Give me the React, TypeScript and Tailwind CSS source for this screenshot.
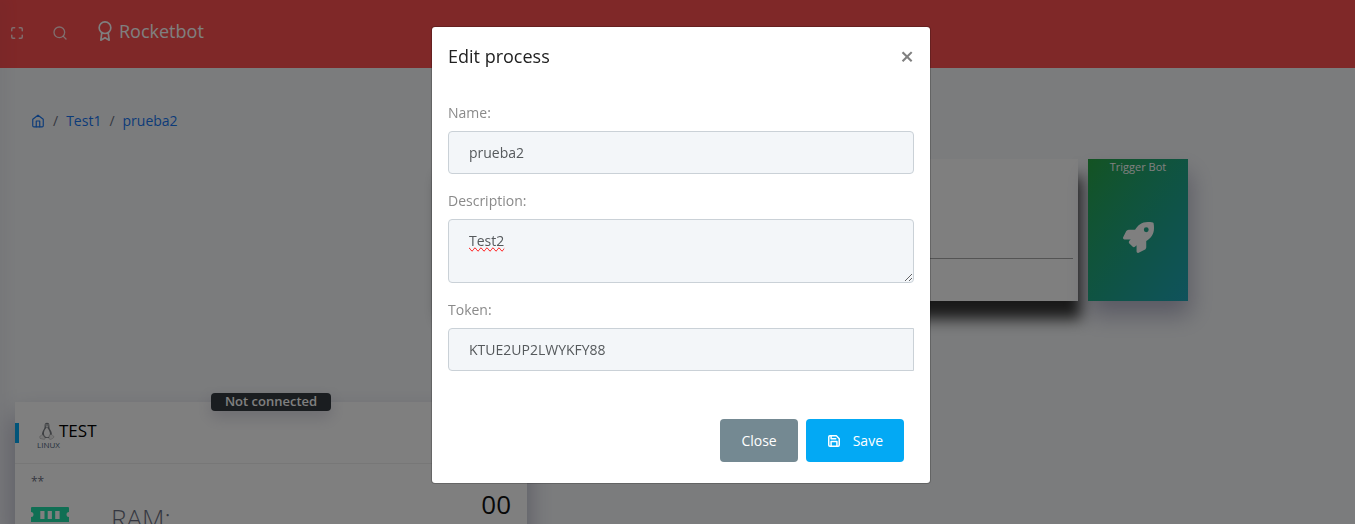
import { useState } from "react";
import { FiAward, FiHome, FiMaximize, FiSave, FiSearch } from "react-icons/fi";
import { FaRocket } from "react-icons/fa";

function Tux() {
  return (
    <svg viewBox="0 0 16 18" className="h-[18px] w-4" aria-hidden="true">
      <path
        d="M8 .8C6 .8 5.500 2.300 5.600 4c.1 2-.5 2.800-1.400 4.200C3.300 9.800 2.800 11.400 3 13l2.600 3h4.800l2.500-3.200c.1-1.700-.5-3.300-1.400-4.700C10.500 6.600 10.400 5.700 10.400 4 10.400 2 9.900.8 8 .8Z"
        fill="#7d8187"
      />
      <path d="M7.900 5.300c-.6.900-2.300 2.400-2.800 4.700-.4 2 .1 4.900 3 5.300 2.900-.4 3.200-3.100 2.600-5.100C10.200 8.200 8.700 6.400 7.900 5.300Z" fill="#fff" />
      <path d="m6.500 4.300 1.500-.8 1.600.8-1.500 1.400Z" fill="#e2e2e2" />
      <circle cx="7.100" cy="2.900" r=".7" fill="#fff" />
      <circle cx="9" cy="2.900" r=".7" fill="#fff" />
      <path
        d="m3.300 12.400 2.900 3.600c.1 1.200-1 1.500-2.100 1.200L1 16.400c-.6-.3.1-1.200-.2-2.100.6-.6 1.500-.3 2.500-1.900Zm9.400 0c.5 1.200 1.400 1.200 2.400 2.300-.5 1.300-2.100 2.400-3.600 2.700-1.100.2-1.700-.7-1.500-1.800l.4-2.700Z"
        fill="#ededed"
        stroke="#a3a3a3"
        strokeWidth=".5"
      />
    </svg>
  );
}

function RamIcon() {
  return (
    <svg viewBox="0 0 38 30" className="h-[30px] w-[38px]" aria-hidden="true">
      <path
        fillRule="evenodd"
        fill="#20dfa8"
        d="M1 0h36a1 1 0 0 1 1 1v4a2.500 2.500 0 0 0 0 5v5H0v-5a2.500 2.500 0 0 0 0-5V1a1 1 0 0 1 1-1Zm8.300 4v8h4.200V4Zm7.400 0v8h4.200V4Zm7.500 0v8h4.400V4Z"
      />
      <path fill="#20dfa8" d="M2 17h34v4H2z" />
    </svg>
  );
}

function TopBar() {
  return (
    <header className="flex h-[68px] items-center bg-[#ff5050] pb-[2px] text-[#ffffffcc]">
      <button type="button" aria-label="Full screen" className="ml-[10px]">
        <FiMaximize className="size-[14px]" strokeWidth={2.5} />
      </button>
      <button type="button" aria-label="Search" className="ml-7">
        <FiSearch className="size-4" />
      </button>
      <a href="#" className="ml-[27px] flex items-center gap-1 pb-1 text-lg text-white">
        <FiAward className="size-5" />
        Rocketbot
      </a>
    </header>
  );
}

function ServerCard() {
  return (
    <section className="relative w-[512px] bg-white shadow-[0_14px_24px_rgba(62,57,107,0.4)]">
      <span className="absolute -top-[9px] left-[196px] flex h-[18px] w-[120px] items-center justify-center rounded bg-[#343a40] text-[13px] font-semibold text-white shadow-[0_6px_16px_rgba(62,57,107,0.2)]">
        Not connected
      </span>
      <div className="flex h-[62px] items-center border-b border-[#efefef]">
        <span className="h-5 w-1 bg-[#03a9f4]" />
        <div className="ml-[18px] pt-1">
          <h2 className="flex items-center gap-1 pl-[2px] text-[17px] leading-5 text-black">
            <Tux />
            TEST
          </h2>
          <p className="text-[8px] leading-2 text-[#4b5f7a]">LINUX</p>
        </div>
      </div>
      <div className="px-4 pt-2">
        <p className="text-xs leading-5 text-[#6b6f82]">**</p>
        <div className="flex items-start">
          <div className="pt-[15px]">
            <RamIcon />
          </div>
          <span className="ml-[42px] pt-3 text-[26px] leading-7 font-light text-[#6b6f82]">RAM:</span>
          <span className="ml-auto text-[26px] leading-6 text-[#111]">00</span>
        </div>
      </div>
    </section>
  );
}

function EditDialog({ onClose }: { onClose: () => void }) {
  const field =
    "block w-full border border-[#cad1d7] bg-[#f3f6f9] px-5 py-[10px] text-sm leading-[21px] text-[#55595c] outline-none";
  return (
    <div className="fixed inset-0 flex items-start justify-center bg-black/50 pt-[26px] pl-[7px]">
      <form
        role="dialog"
        aria-modal="true"
        aria-labelledby="dialog-title"
        className="w-[500px] rounded border border-black/20 bg-white bg-clip-padding"
        onSubmit={(event) => event.preventDefault()}
      >
        <div className="flex items-center justify-between px-4 pt-[15px]">
          <h1 id="dialog-title" className="text-lg leading-7 text-[#212121]">
            Edit process
          </h1>
          <button
            type="button"
            aria-label="Close dialog"
            onClick={onClose}
            className="text-2xl leading-7 font-semibold text-[#808080]"
          >
            ×
          </button>
        </div>
        <div className="flex flex-col gap-4 px-4 pt-8 text-sm text-[#8a8a8a]">
          <div>
            <label htmlFor="name" className="mb-2 block leading-[21px]">
              Name:
            </label>
            <input id="name" defaultValue="prueba2" className={`${field} rounded`} />
          </div>
          <div>
            <label htmlFor="description" className="mb-2 block leading-[21px]">
              Description:
            </label>
            <textarea
              id="description"
              rows={2}
              defaultValue="Test2"
              className={`${field} h-16 resize rounded [text-decoration-line:spelling-error]`}
            />
          </div>
          <div>
            <label htmlFor="token" className="mb-2 block leading-[21px]">
              Token:
            </label>
            <input id="token" defaultValue="KTUE2UP2LWYKFY88" className={`${field} rounded-l`} />
          </div>
        </div>
        <div className="flex justify-end gap-2 pt-12 pr-[26px] pb-[21px] text-sm leading-[21px] font-medium text-white">
          <button type="button" onClick={onClose} className="rounded bg-[#748992] px-[21px] py-[11px]">
            Close
          </button>
          <button type="submit" className="flex items-center gap-3 rounded bg-[#03a9f4] px-[21px] py-[11px]">
            <FiSave className="size-[14px]" strokeWidth={2.5} />
            Save
          </button>
        </div>
      </form>
    </div>
  );
}

export default function App() {
  const [open, setOpen] = useState(true);
  return (
    <div className="relative h-screen overflow-hidden bg-[#f7f9fb] font-['Open_Sans',sans-serif]">
      <TopBar />
      <nav aria-label="Breadcrumb" className="flex items-center gap-2 px-[31px] pt-[42px] text-sm leading-[21px] text-[#1877f2]">
        <a href="#" aria-label="Home">
          <FiHome className="size-[14px]" />
        </a>
        <span className="text-[#6b6f82]">/</span>
        <a href="#">Test1</a>
        <span className="text-[#6b6f82]">/</span>
        <a href="#">prueba2</a>
      </nav>
      <main>
        <div className="flex justify-end gap-[10px] pt-7 pr-[167px]">
          <section className="h-[142px] w-[640px] bg-white px-[5px] pt-[99px] shadow-[3px_18px_14px_#333]">
            <hr className="border-[#a8a8a8]" />
          </section>
          <button
            type="button"
            className="flex h-[142px] w-[100px] flex-col items-center bg-linear-to-br from-[#28a745] to-[#20a5b8] text-[11px] leading-4 text-white shadow-[2px_14px_22px_rgba(62,57,107,0.36)]"
          >
            Trigger Bot
            <FaRocket className="mt-[47px] size-[31px]" />
          </button>
        </div>
        <div className="px-[15px] pt-[101px]">
          <ServerCard />
        </div>
      </main>
      <aside className="absolute top-0 left-0 h-full w-0 shadow-[0_0_16px_2px_rgba(62,57,107,0.2)]" />
      {open && <EditDialog onClose={() => setOpen(false)} />}
    </div>
  );
}
